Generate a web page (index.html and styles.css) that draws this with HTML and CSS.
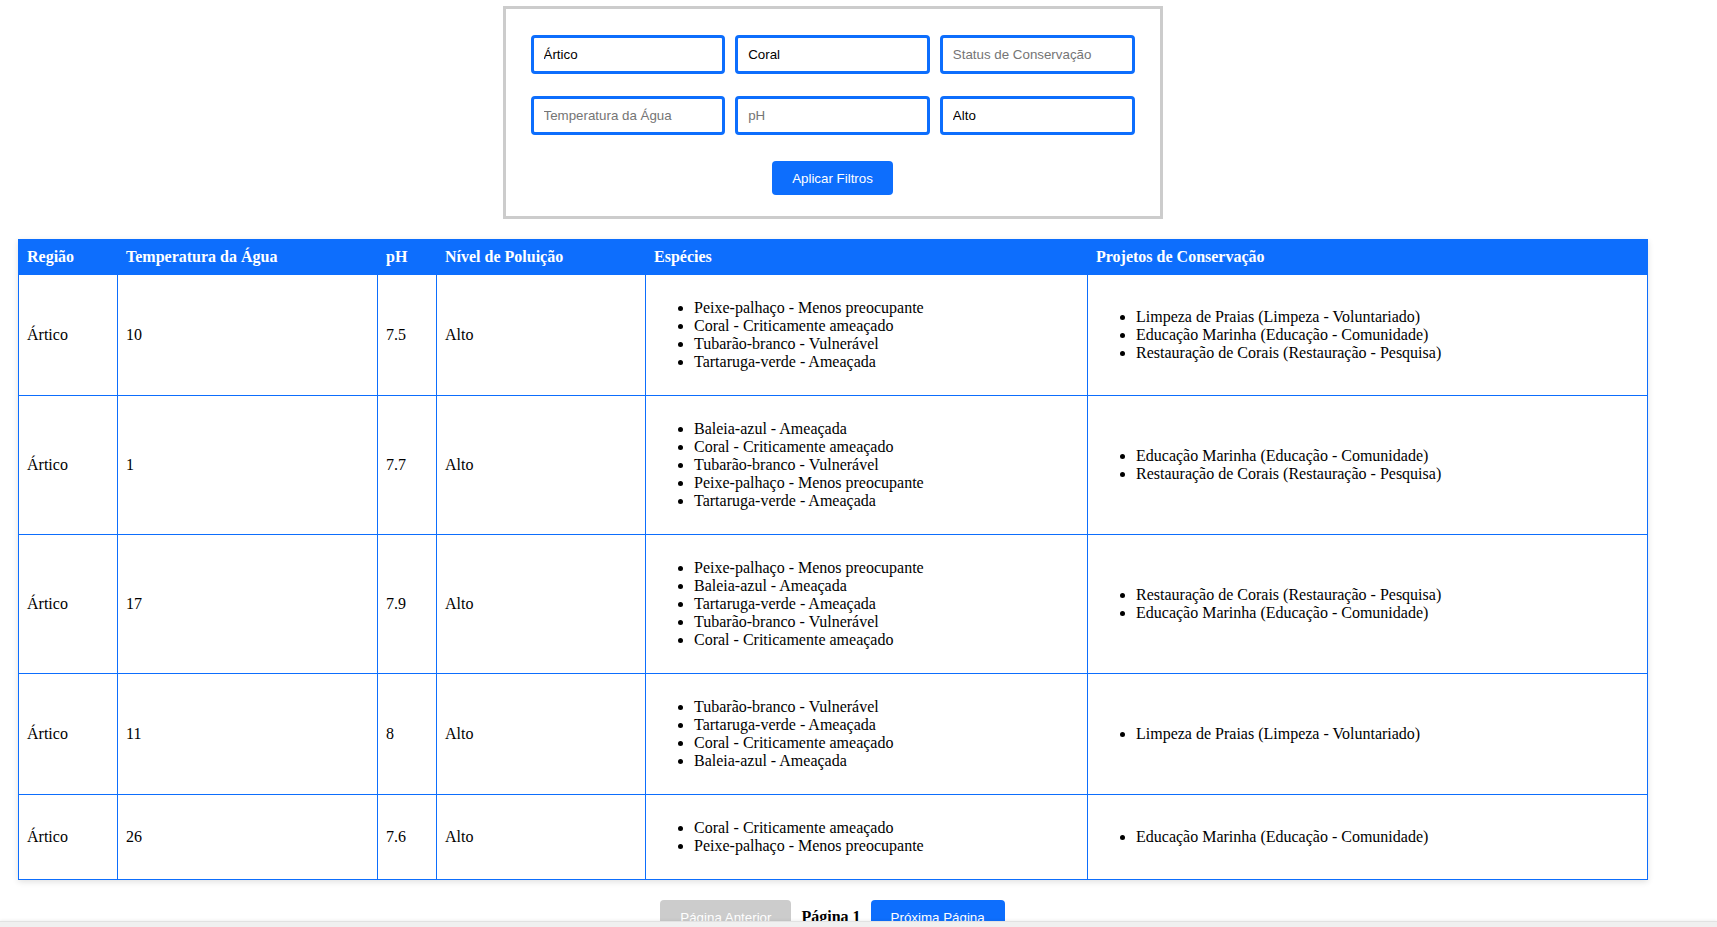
FILE: index.html
```html
<!DOCTYPE html>
<html lang="pt">
<head>
<meta charset="utf-8">
<title>Ecossistemas Marinhos</title>
<link rel="stylesheet" href="styles.css">
</head>
<body>
<div class="page">
  <div class="filters">
    <div class="filter-grid">
      <input class="field" type="text" value="Ártico" placeholder="Região">
      <input class="field" type="text" value="Coral" placeholder="Espécie">
      <input class="field" type="text" placeholder="Status de Conservação">
      <input class="field" type="text" placeholder="Temperatura da Água">
      <input class="field" type="text" placeholder="pH">
      <input class="field" type="text" value="Alto" placeholder="Nível de Poluição">
    </div>
    <div class="filter-actions">
      <button class="btn btn-primary" type="button">Aplicar Filtros</button>
    </div>
  </div>

  <table class="data">
    <colgroup>
      <col class="c-regiao">
      <col class="c-temp">
      <col class="c-ph">
      <col class="c-pol">
      <col class="c-esp">
      <col class="c-proj">
    </colgroup>
    <thead>
      <tr>
        <th>Região</th>
        <th>Temperatura da Água</th>
        <th>pH</th>
        <th>Nível de Poluição</th>
        <th>Espécies</th>
        <th>Projetos de Conservação</th>
      </tr>
    </thead>
    <tbody>
      <tr>
        <td>Ártico</td><td>10</td><td>7.5</td><td>Alto</td>
        <td><ul>
          <li>Peixe-palhaço - Menos preocupante</li>
          <li>Coral - Criticamente ameaçado</li>
          <li>Tubarão-branco - Vulnerável</li>
          <li>Tartaruga-verde - Ameaçada</li>
        </ul></td>
        <td><ul>
          <li>Limpeza de Praias (Limpeza - Voluntariado)</li>
          <li>Educação Marinha (Educação - Comunidade)</li>
          <li>Restauração de Corais (Restauração - Pesquisa)</li>
        </ul></td>
      </tr>
      <tr>
        <td>Ártico</td><td>1</td><td>7.7</td><td>Alto</td>
        <td><ul>
          <li>Baleia-azul - Ameaçada</li>
          <li>Coral - Criticamente ameaçado</li>
          <li>Tubarão-branco - Vulnerável</li>
          <li>Peixe-palhaço - Menos preocupante</li>
          <li>Tartaruga-verde - Ameaçada</li>
        </ul></td>
        <td><ul>
          <li>Educação Marinha (Educação - Comunidade)</li>
          <li>Restauração de Corais (Restauração - Pesquisa)</li>
        </ul></td>
      </tr>
      <tr>
        <td>Ártico</td><td>17</td><td>7.9</td><td>Alto</td>
        <td><ul>
          <li>Peixe-palhaço - Menos preocupante</li>
          <li>Baleia-azul - Ameaçada</li>
          <li>Tartaruga-verde - Ameaçada</li>
          <li>Tubarão-branco - Vulnerável</li>
          <li>Coral - Criticamente ameaçado</li>
        </ul></td>
        <td><ul>
          <li>Restauração de Corais (Restauração - Pesquisa)</li>
          <li>Educação Marinha (Educação - Comunidade)</li>
        </ul></td>
      </tr>
      <tr>
        <td>Ártico</td><td>11</td><td>8</td><td>Alto</td>
        <td><ul>
          <li>Tubarão-branco - Vulnerável</li>
          <li>Tartaruga-verde - Ameaçada</li>
          <li>Coral - Criticamente ameaçado</li>
          <li>Baleia-azul - Ameaçada</li>
        </ul></td>
        <td><ul>
          <li>Limpeza de Praias (Limpeza - Voluntariado)</li>
        </ul></td>
      </tr>
      <tr>
        <td>Ártico</td><td>26</td><td>7.6</td><td>Alto</td>
        <td><ul>
          <li>Coral - Criticamente ameaçado</li>
          <li>Peixe-palhaço - Menos preocupante</li>
        </ul></td>
        <td><ul>
          <li>Educação Marinha (Educação - Comunidade)</li>
        </ul></td>
      </tr>
    </tbody>
  </table>

  <div class="pager">
    <button class="btn btn-disabled" type="button" disabled>Página Anterior</button>
    <span class="pager-label">Página 1</span>
    <button class="btn btn-primary" type="button">Próxima Página</button>
  </div>
</div>
<div class="hscroll"></div>
</body>
</html>
```

FILE: styles.css
```css
html, body {
  margin: 0;
  padding: 0;
  background: #ffffff;
}

body {
  font-family: "Liberation Serif", "Times New Roman", serif;
  font-size: 16px;
  color: #000;
}

.page {
  width: 1629px;
  margin-left: 18px;
  padding-top: 6px;
}

.filters {
  box-sizing: border-box;
  width: 660px;
  margin: 0 auto;
  border: 3px solid #cccccc;
  padding: 26px 25px 21px;
  background: #fff;
}

.filter-grid {
  display: grid;
  grid-template-columns: repeat(3, 1fr);
  column-gap: 10px;
  row-gap: 22px;
}

.field {
  box-sizing: border-box;
  height: 39px;
  width: 100%;
  border: 3px solid #0d6efd;
  border-radius: 4px;
  padding: 0 10px;
  font-family: "Liberation Sans", Arial, sans-serif;
  font-size: 13.33px;
  color: #000;
  background: #fff;
  outline: none;
}

.field::placeholder {
  color: #757575;
}

.filter-actions {
  display: flex;
  justify-content: center;
  margin-top: 26px;
}

.btn {
  box-sizing: border-box;
  height: 34px;
  padding: 0 20px;
  border: none;
  border-radius: 4px;
  font-family: "Liberation Sans", Arial, sans-serif;
  font-size: 13.33px;
  color: #fff;
  cursor: pointer;
}

.btn-primary {
  background: #0d6efd;
}

.btn-disabled {
  background: #cccccc;
  color: #fff;
  cursor: default;
}

.data {
  width: 1629px;
  margin-top: 20px;
  border-collapse: collapse;
  table-layout: fixed;
  box-shadow: 0 2px 6px rgba(0, 0, 0, 0.12);
}

.c-regiao { width: 99px; }
.c-temp { width: 260px; }
.c-ph { width: 59px; }
.c-pol { width: 209px; }
.c-esp { width: 442px; }
.c-proj { width: 560px; }

.data th {
  background: #0d6efd;
  color: #fff;
  font-weight: bold;
  text-align: left;
  padding: 8px;
  border: 1px solid #0d6efd;
}

.data td {
  padding: 8px;
  border: 1px solid #0d6efd;
  vertical-align: middle;
  text-align: left;
}

.data ul {
  margin: 16px 0;
  padding-left: 40px;
}

.pager {
  display: flex;
  justify-content: center;
  align-items: center;
  gap: 10px;
  margin-top: 20px;
  padding-bottom: 20px;
}

.pager-label {
  font-weight: bold;
  font-size: 16px;
}

.hscroll {
  position: fixed;
  left: 0;
  right: 0;
  bottom: 0;
  height: 5px;
  background: #f0f0f0;
  border-top: 1px solid #e2e2e2;
  box-shadow: 0 -1px 3px rgba(0, 0, 0, 0.06);
}
```
